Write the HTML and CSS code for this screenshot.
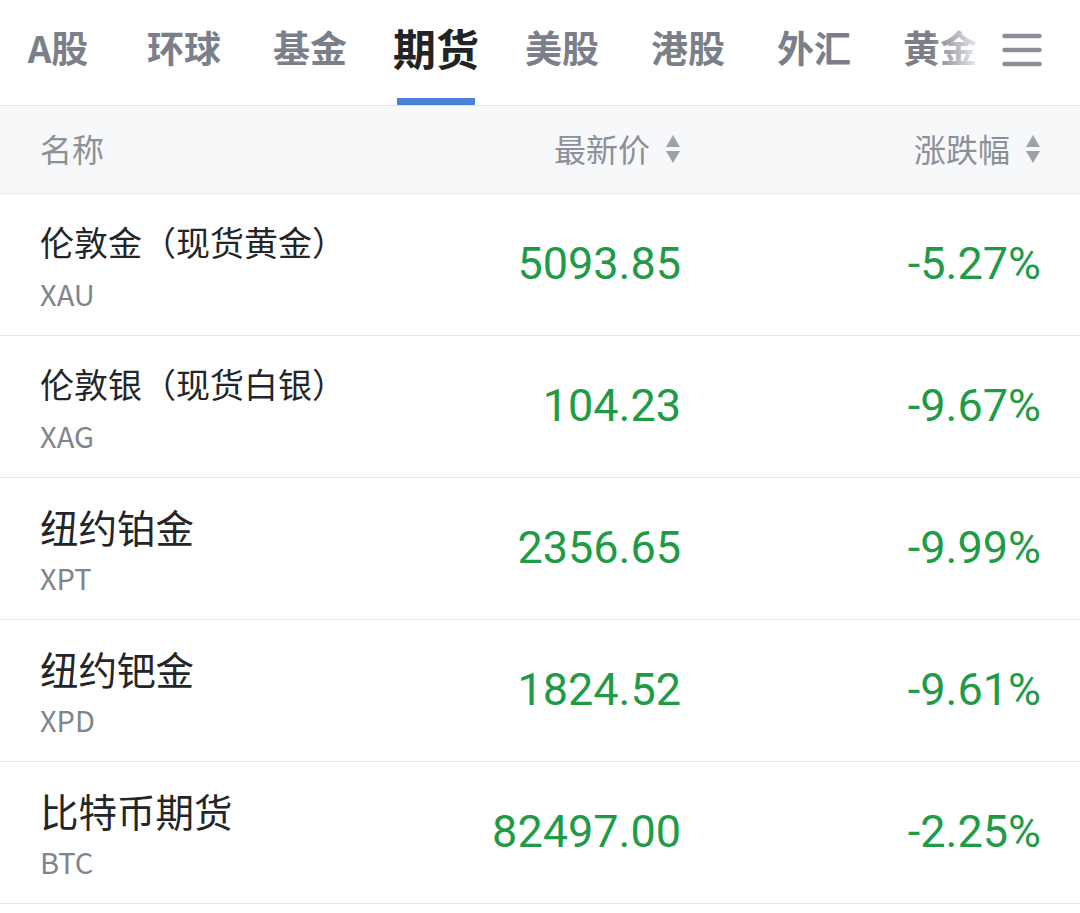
FILE: index.html
```html
<!DOCTYPE html>
<html lang="zh-CN">
<head>
<meta charset="utf-8">
<title>期货</title>
<link rel="stylesheet" href="styles.css">
</head>
<body>
<div class="page">
  <nav class="tabbar">
    <ul class="tabs">
      <li class="tab">A股</li>
      <li class="tab">环球</li>
      <li class="tab">基金</li>
      <li class="tab active">期货</li>
      <li class="tab">美股</li>
      <li class="tab">港股</li>
      <li class="tab">外汇</li>
      <li class="tab">黄金</li>
    </ul>
    <div class="menu">
      <svg class="menu-icon" width="40" height="34" viewBox="0 0 40 34">
        <path d="M2.5 3h35M2.5 17h35M2.5 31h35" stroke="#8a8e97" stroke-width="4.5" stroke-linecap="round" fill="none"/>
      </svg>
    </div>
  </nav>

  <div class="table">
    <div class="thead">
      <div class="th th-name">名称</div>
      <div class="th th-num">最新价<svg class="sort" width="16" height="30" viewBox="0 0 16 30"><path d="M8 1L15 13H1Z M8 29L15 17H1Z" fill="#9da1a8"/></svg></div>
      <div class="th th-num">涨跌幅<svg class="sort" width="16" height="30" viewBox="0 0 16 30"><path d="M8 1L15 13H1Z M8 29L15 17H1Z" fill="#9da1a8"/></svg></div>
    </div>

    <div class="row">
      <div class="cell-name"><div class="name small">伦敦金（现货黄金）</div><div class="code">XAU</div></div>
      <div class="num">5093.85</div>
      <div class="num">-5.27%</div>
    </div>
    <div class="row">
      <div class="cell-name"><div class="name small">伦敦银（现货白银）</div><div class="code">XAG</div></div>
      <div class="num">104.23</div>
      <div class="num">-9.67%</div>
    </div>
    <div class="row">
      <div class="cell-name"><div class="name">纽约铂金</div><div class="code">XPT</div></div>
      <div class="num">2356.65</div>
      <div class="num">-9.99%</div>
    </div>
    <div class="row">
      <div class="cell-name"><div class="name">纽约钯金</div><div class="code">XPD</div></div>
      <div class="num">1824.52</div>
      <div class="num">-9.61%</div>
    </div>
    <div class="row">
      <div class="cell-name"><div class="name">比特币期货</div><div class="code">BTC</div></div>
      <div class="num">82497.00</div>
      <div class="num">-2.25%</div>
    </div>
  </div>
</div>
</body>
</html>
```

FILE: styles.css
```css
* { box-sizing: border-box; }
html, body { margin: 0; padding: 0; background: #fff; }
body {
  font-family: "Noto Sans CJK SC", "Noto Sans", sans-serif;
  width: 1080px;
  height: 913px;
  overflow: hidden;
}
.page { width: 1080px; }

.tabbar {
  position: relative;
  height: 106px;
  border-bottom: 1px solid #e3e4e7;
}
.tabs {
  list-style: none;
  margin: 0 0 0 -5px;
  padding: 0;
  display: flex;
  height: 105px;
}
.tab {
  width: 126px;
  flex: 0 0 126px;
  text-align: center;
  font-size: 37px;
  font-weight: 700;
  color: #7a7f89;
  line-height: 94px;
  position: relative;
  white-space: nowrap;
}
.tab.active {
  color: #222325;
  font-size: 43px;
}
.tab.active::after {
  content: "";
  position: absolute;
  left: 24px;
  width: 78px;
  bottom: 0;
  height: 7px;
  background: #4a80d8;
}
.menu {
  position: absolute;
  top: 0;
  right: 0;
  width: 150px;
  height: 104px;
  background: linear-gradient(to right, rgba(255,255,255,0) 0px, rgba(255,255,255,0.6) 35px, #fff 55px);
  display: flex;
  align-items: center;
  justify-content: flex-end;
  padding-right: 38px;
  padding-bottom: 4px;
}
.menu-icon { display: block; }

.thead {
  display: grid;
  grid-template-columns: 1fr 300px 360px;
  padding: 0 39px 0 40px;
  height: 88px;
  align-items: center;
  background: #f7f8fa;
  border-bottom: 1px solid #e8e9ec;
}
.th {
  font-size: 32px;
  color: #8c9098;
  line-height: 40px;
  padding-bottom: 4px;
}
.th-num {
  display: flex;
  justify-content: flex-end;
  align-items: center;
  gap: 15px;
}
.sort { display: block; margin-top: 2px; }

.row {
  display: grid;
  grid-template-columns: 1fr 300px 360px;
  padding: 0 39px 0 40px;
  height: 142px;
  border-bottom: 1px solid #e8e9ec;
}
.cell-name {
  padding-top: 26px;
}
.name {
  font-size: 38.5px;
  line-height: 44px;
  color: #242528;
  white-space: nowrap;
}
.name.small { font-size: 34px; }
.code {
  margin-top: 11px;
  font-size: 29px;
  line-height: 36px;
  color: #80848c;
}
.num {
  display: flex;
  align-items: center;
  justify-content: flex-end;
  font-family: Roboto, "Noto Sans", sans-serif;
  font-size: 45px;
  color: #1f9b48;
  padding-bottom: 2px;
}
```
